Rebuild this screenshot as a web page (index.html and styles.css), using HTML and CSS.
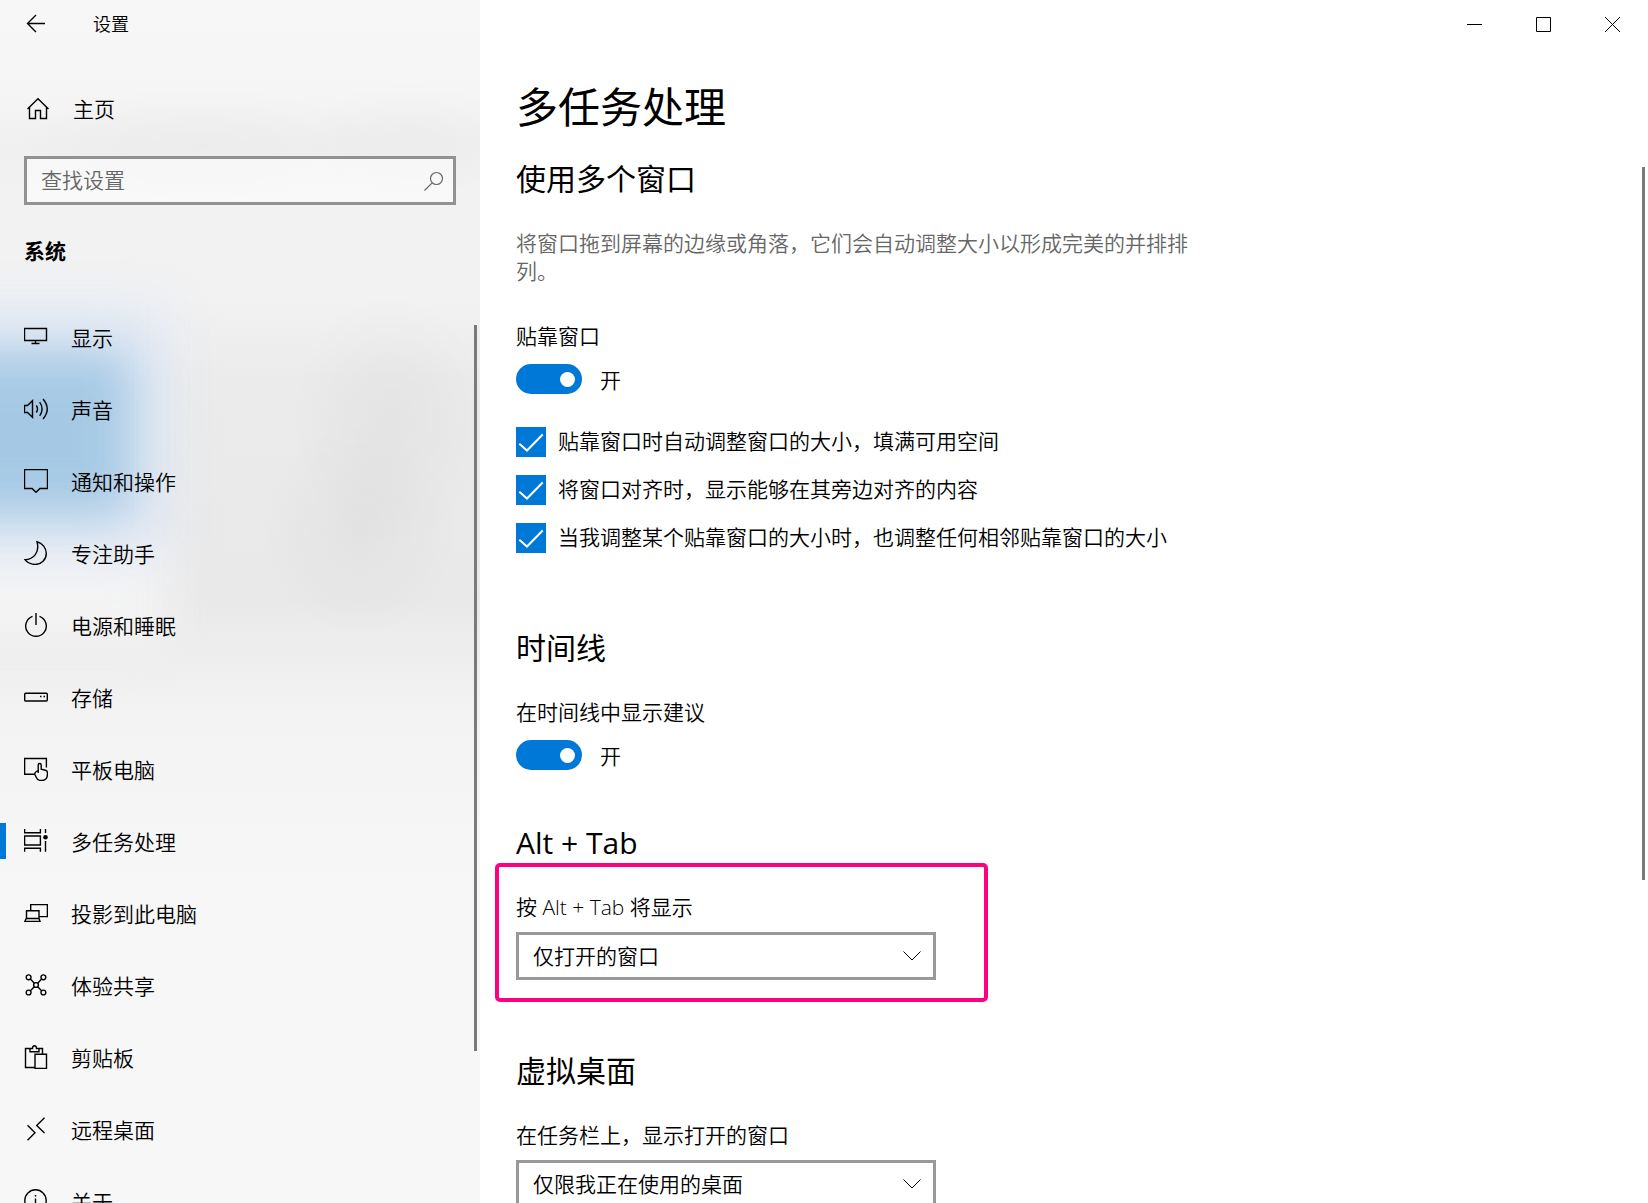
FILE: index.html
```html
<!DOCTYPE html>
<html lang="zh-CN">
<head>
<meta charset="utf-8">
<title>设置</title>
<link rel="stylesheet" href="styles.css">
</head>
<body>
<div class="window">
  <aside class="sidebar">
    <header class="titlebar">
      <button class="back" type="button" aria-label="返回">
        <svg class="icon" viewBox="0 0 24 24"><path d="M21 11.5H3.500M12 3L3.500 11.500L12 20"/></svg>
      </button>
      <span class="app-name">设置</span>
    </header>
    <a class="home" href="#">
      <svg class="icon" viewBox="0 0 24 24"><path d="M1.500 12L12 1.700L22.500 12M3.500 10.500V21.500H9.500V13.500H14.500V21.500H20.500V10.500"/></svg>
      <span>主页</span>
    </a>
    <div class="search">
      <input type="text" placeholder="查找设置" aria-label="查找设置">
      <svg class="icon" viewBox="0 0 24 24"><circle cx="14.500" cy="9.500" r="6"/><path d="M10.200 13.800L2.500 21.500"/></svg>
    </div>
    <h2 class="category">系统</h2>
    <nav class="nav">
      <a href="#"><svg class="icon" viewBox="0 0 24 24"><path d="M.5 3.500H22.500V15.500H.5ZM11.500 15.500V18.500M7.500 18.500H15.500"/></svg><span>显示</span></a>
      <a href="#"><svg class="icon" viewBox="0 0 24 24"><path d="M.5 8.500H3.500L8.500 3.700V20.300L3.500 15.500H.5ZM12.300 8.500Q14.700 12 12.300 15.500M15.700 5.200Q20.500 12 15.700 18.800M19 2Q27.500 12 19 22"/></svg><span>声音</span></a>
      <a href="#"><svg class="icon" viewBox="0 0 24 24"><path d="M.5 .5H23.500V19.500H16L12 23.300L8 19.500H.5Z"/></svg><span>通知和操作</span></a>
      <a href="#"><svg class="icon" viewBox="0 0 24 24"><path d="M13 .8C18.500 2.300 22.300 7 22.300 12.500C22.300 18.500 17.300 23.400 11.300 23.400C7 23.400 3.200 21.600 1 18.700C9.500 18.200 16 11.500 13 .8Z"/></svg><span>专注助手</span></a>
      <a href="#"><svg class="icon" viewBox="0 0 24 24"><path d="M12 0V12M8.500 3.300A10.300 10.300 0 1 0 15.500 3.300"/></svg><span>电源和睡眠</span></a>
      <a href="#"><svg class="icon" viewBox="0 0 24 24"><rect x=".7" y="8.300" width="22.600" height="7.700" rx="1"/><path d="M16 11.500H17.500M19.500 11.500H21"/></svg><span>存储</span></a>
      <a href="#"><svg class="icon" viewBox="0 0 24 24"><path d="M10.500 17.200H.6V1.500H22.400V10.500M14.200 16V8Q14.200 6.500 15.700 6.500Q17.200 6.500 17.200 8V12.300L21.500 13.300Q23.400 13.800 23.400 15.500V17.500Q23.400 23.500 17.500 23.500Q13.500 23.500 12.300 20.500L10.900 17.500Q10.500 15.500 12.300 14.500L14.200 13.500"/></svg><span>平板电脑</span></a>
      <a class="current" href="#" aria-current="page"><svg class="icon" viewBox="0 0 24 24"><path d="M.6 0V3.700H16.400V0M.6 7H16.400V16H.6ZM.6 22.700V19.300H16.400V22.700M21.500 0V4M21.500 12V22.700"/><circle class="dot" cx="21.500" cy="8.300" r="2.300"/></svg><span>多任务处理</span></a>
      <a href="#"><svg class="icon" viewBox="0 0 24 24"><path d="M6.700 9.500V3.600H23.400V15.600H15.500M2.500 17.500V9.800H15V17.500M2.300 17.500H15L16 20.400H.8Z"/></svg><span>投影到此电脑</span></a>
      <a href="#"><svg class="icon" viewBox="0 0 24 24"><circle cx="4.600" cy="4.300" r="2.400"/><circle cx="19.400" cy="4.300" r="2.400"/><circle cx="4.600" cy="19.500" r="2.400"/><circle cx="19.400" cy="19.500" r="2.400"/><circle cx="12" cy="12" r="2.400"/><path d="M6.400 6L10.300 10.200M17.600 6L13.700 10.200M6.400 17.700L10.300 13.700M17.600 17.700L13.700 13.700"/></svg><span>体验共享</span></a>
      <a href="#"><svg class="icon" viewBox="0 0 24 24"><path d="M11 22.500H1.500V3.500H6M15 3.500H18.500V9M6 3.500H8.500Q8.500 .7 10.500 .7Q12.500 .7 12.500 3.500H15V6.700H6ZM11 9.300H22.500V23.400H11Z"/></svg><span>剪贴板</span></a>
      <a href="#"><svg class="icon" viewBox="0 0 24 24"><path d="M3.500 8.200L11 15.700L3.500 23.200M20.500 .8L12.700 8.400L20.500 16"/></svg><span>远程桌面</span></a>
      <a href="#"><svg class="icon" viewBox="0 0 24 24"><circle cx="11.500" cy="11.500" r="10.700"/><path d="M11.500 9.500V17M11.500 6V7.500"/></svg><span>关于</span></a>
    </nav>
    <div class="scrollbar nav-scroll"></div>
  </aside>

  <main class="content">
    <div class="window-controls">
      <button type="button" aria-label="最小化"><svg viewBox="0 0 15 15"><path d="M0 7.500H15"/></svg></button>
      <button type="button" aria-label="最大化"><svg viewBox="0 0 15 15"><path d="M.5 .5H14.500V14.500H.5Z"/></svg></button>
      <button type="button" aria-label="关闭"><svg viewBox="0 0 15 15"><path d="M0 0L15 15M15 0L0 15"/></svg></button>
    </div>
    <div class="page">
      <h1>多任务处理</h1>

      <section>
        <h2>使用多个窗口</h2>
        <p class="description">将窗口拖到屏幕的边缘或角落，它们会自动调整大小以形成完美的并排排列。</p>
        <div class="setting">
          <label for="snap">贴靠窗口</label>
          <div class="toggle"><input id="snap" type="checkbox" role="switch" checked><span>开</span></div>
        </div>
        <div class="checks">
          <label class="check"><input type="checkbox" checked><svg viewBox="0 0 30 30"><path d="M3.300 16.700L11 23.500L26.700 7.500"/></svg><span>贴靠窗口时自动调整窗口的大小，填满可用空间</span></label>
          <label class="check"><input type="checkbox" checked><svg viewBox="0 0 30 30"><path d="M3.300 16.700L11 23.500L26.700 7.500"/></svg><span>将窗口对齐时，显示能够在其旁边对齐的内容</span></label>
          <label class="check"><input type="checkbox" checked><svg viewBox="0 0 30 30"><path d="M3.300 16.700L11 23.500L26.700 7.500"/></svg><span>当我调整某个贴靠窗口的大小时，也调整任何相邻贴靠窗口的大小</span></label>
        </div>
      </section>

      <section>
        <h2>时间线</h2>
        <div class="setting">
          <label for="timeline">在时间线中显示建议</label>
          <div class="toggle"><input id="timeline" type="checkbox" role="switch" checked><span>开</span></div>
        </div>
      </section>

      <section>
        <h2>Alt + Tab</h2>
        <div class="field highlighted">
          <label for="alttab">按 Alt + Tab 将显示</label>
          <div class="dropdown">
            <select id="alttab"><option>仅打开的窗口</option></select>
            <svg viewBox="0 0 18 10"><path d="M.5 .5L9 9L17.500 .5"/></svg>
          </div>
        </div>
      </section>

      <section>
        <h2>虚拟桌面</h2>
        <div class="field">
          <label for="taskbar">在任务栏上，显示打开的窗口</label>
          <div class="dropdown">
            <select id="taskbar"><option>仅限我正在使用的桌面</option></select>
            <svg viewBox="0 0 18 10"><path d="M.5 .5L9 9L17.500 .5"/></svg>
          </div>
        </div>
      </section>
    </div>
    <div class="scrollbar page-scroll"></div>
  </main>
</div>
</body>
</html>
```
FILE: styles.css
```css
* {
  box-sizing: border-box;
}

body {
  margin: 0;
  background: #fff;
  color: #000;
  font: 350 21px/28px "Open Sans", "Noto Sans CJK SC", sans-serif;
}

h1,
h2,
p {
  margin: 0;
}

a {
  color: inherit;
  text-decoration: none;
}

button {
  display: grid;
  place-items: center;
  padding: 0;
  border: 0;
  background: none;
}

svg {
  fill: none;
  stroke: #000;
}

.icon {
  flex: none;
  width: 24px;
  height: 24px;
  stroke-width: 1.4;
}

.dot {
  fill: #000;
  stroke: none;
}

.window {
  display: grid;
  grid-template-columns: 480px 1fr;
  height: 100vh;
  overflow: hidden;
}

/* Sidebar with the acrylic backdrop */
.sidebar {
  position: relative;
  isolation: isolate;
  overflow: hidden;
  background:
    radial-gradient(ellipse 100px 130px at 390px 420px, rgb(0 0 0 / 3%), transparent),
    radial-gradient(ellipse 100px 110px at 360px 530px, rgb(0 0 0 / 3%), transparent),
    radial-gradient(ellipse 190px 60px at 200px 145px, rgb(0 0 0 / 2%), transparent),
    radial-gradient(ellipse 110px 60px at 410px 140px, rgb(0 0 0 / 2%), transparent),
    linear-gradient(#f7f7f7 0, #f6f6f6 80px, #f0f0f0 145px, #f2f2f2 200px, #f2f2f2 300px, #ebebeb 380px, #e9e9e9 600px, #f2f2f2 700px, #f6f6f6 830px, #f7f7f7 900px);
}

.sidebar::before,
.sidebar::after {
  content: "";
  position: absolute;
  z-index: -1;
}

.sidebar::before {
  left: -80px;
  top: 300px;
  width: 250px;
  height: 340px;
  background: linear-gradient(#e6ebf5 70%, #f4f4f4 85%);
  filter: blur(24px);
}

.sidebar::after {
  left: -120px;
  top: 350px;
  width: 254px;
  height: 168px;
  background: #a5c9e4;
  filter: blur(25px);
}

.titlebar {
  display: flex;
  align-items: center;
  gap: 45px;
  height: 48px;
  padding-left: 24px;
}

.app-name {
  font-size: 18px;
}

.home {
  display: flex;
  align-items: center;
  gap: 23px;
  height: 72px;
  margin-top: 25px;
  padding-left: 26px;
  margin-bottom: 11px;
}

.search {
  display: flex;
  align-items: center;
  height: 49px;
  margin: 0 24px;
  padding-right: 7px;
  border: 3px solid #929292;
  background: rgb(255 255 255 / 50%);
}

.search input {
  flex: 1;
  min-width: 0;
  padding: 0 14px 2px;
  border: 0;
  outline: 0;
  background: none;
  font: inherit;
}

.search input::placeholder {
  color: #666;
  opacity: 1;
}

.search .icon {
  stroke: #666;
  stroke-width: 1.2;
}

.category {
  margin: 32px 24px 36px;
  font-size: 21px;
  font-weight: 700;
  line-height: 28px;
}

.nav a {
  position: relative;
  display: flex;
  align-items: center;
  gap: 23px;
  height: 72px;
  padding-left: 24px;
}

.nav span {
  padding-top: 2px;
}

.nav .current::before {
  content: "";
  position: absolute;
  left: 0;
  width: 6px;
  height: 36px;
  background: #0078d7;
}

.scrollbar {
  position: absolute;
  width: 3px;
  background: #7a7a7a;
}

.nav-scroll {
  right: 3px;
  top: 325px;
  height: 726px;
}

/* Settings page */
.content {
  position: relative;
  min-width: 0;
}

.window-controls {
  display: flex;
  justify-content: flex-end;
  padding-right: 1px;
}

.window-controls button {
  width: 69px;
  height: 49px;
}

.window-controls svg {
  width: 15px;
  height: 15px;
}

.page {
  padding: 30px 36px;
}

.page-scroll {
  right: 3px;
  top: 167px;
  height: 713px;
}

h1 {
  margin-bottom: 24px;
  font-size: 42px;
  font-weight: 400;
  line-height: 56px;
}

section h2 {
  margin-bottom: 30px;
  font-size: 30px;
  font-weight: 400;
  line-height: 40px;
}

section:nth-of-type(1) {
  margin-bottom: 75px;
}

section:nth-of-type(2) {
  margin-bottom: 53px;
}

section:nth-of-type(3) {
  margin-bottom: 71px;
}

.description {
  max-width: 690px;
  margin-bottom: 37px;
  color: #666;
}

.setting {
  display: grid;
  gap: 14px;
}

.toggle {
  display: flex;
  align-items: center;
  gap: 18px;
  height: 30px;
}

.toggle span {
  padding-top: 2px;
}

.toggle input {
  appearance: none;
  display: flex;
  align-items: center;
  justify-content: flex-end;
  width: 66px;
  height: 30px;
  margin: 0;
  padding-right: 7px;
  border-radius: 15px;
  background: #0078d7;
}

.toggle input::before {
  content: "";
  width: 15px;
  height: 15px;
  border-radius: 50%;
  background: #fff;
}

.checks {
  display: grid;
  gap: 18px;
  margin-top: 33px;
}

.check {
  display: grid;
  grid-template-columns: 30px 1fr;
  column-gap: 12px;
  align-items: center;
  height: 30px;
}

.check span {
  padding-bottom: 2px;
}

.check input {
  appearance: none;
  grid-area: 1 / 1;
  width: 30px;
  height: 30px;
  margin: 0;
  background: #0078d7;
}

.check svg {
  grid-area: 1 / 1;
  stroke: #fff;
  stroke-width: 2;
}

.field {
  position: relative;
  display: grid;
  gap: 11px;
  width: 420px;
}

.highlighted::after {
  content: "";
  position: absolute;
  inset: -30px -52px -22px -21px;
  border: 4px solid #ff0080;
  border-radius: 5px;
  pointer-events: none;
}

.dropdown {
  display: grid;
  align-items: center;
}

.dropdown select {
  appearance: none;
  grid-area: 1 / 1;
  width: 100%;
  height: 48px;
  padding: 0 48px 0 14px;
  border: 3px solid #999;
  border-radius: 0;
  background: #fff;
  color: #000;
  font: inherit;
}

.dropdown svg {
  grid-area: 1 / 1;
  justify-self: end;
  width: 18px;
  height: 10px;
  margin-right: 15px;
  pointer-events: none;
}
```
